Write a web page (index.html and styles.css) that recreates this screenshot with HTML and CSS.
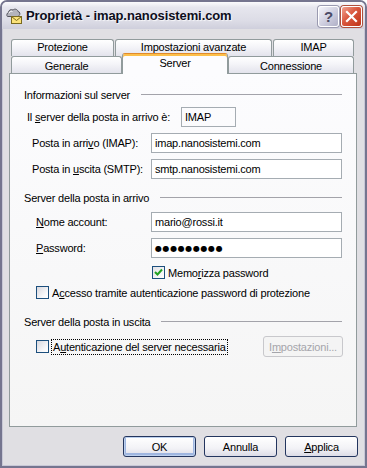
FILE: index.html
```html
<!DOCTYPE html>
<html lang="it">
<head>
    <meta charset="UTF-8">
    <title>Proprietà - imap.nanosistemi.com</title>
    <link rel="stylesheet" href="styles.css">
</head>
<body>
    <div class="window">
        <div class="titlebar">
            <svg class="app-icon" width="16" height="16" viewBox="0 0 16 16">
                <path d="M1.5 8.5 C0.5 8.5 0.5 5 2.5 4.5 C2.5 2 5 1 7 2 C8.5 0.5 11.5 1 12 3.5 C14 3.5 14.5 6.5 13 7.5 L12 8.5 Z" fill="#b4b4bc" stroke="#55555f" stroke-width="1"/>
                <path d="M3 5 C3.5 3.5 5 3 6.5 3.5" fill="none" stroke="#fff" stroke-width="1"/>
                <rect x="5.5" y="8.5" width="10" height="7" fill="#fbe27a" stroke="#7a6a20" stroke-width="1"/>
                <path d="M5.5 8.5 L10.5 12.5 L15.5 8.5" fill="none" stroke="#7a6a20" stroke-width="1"/>
            </svg>
            <span class="title">Proprietà - imap.nanosistemi.com</span>
            <div class="caption-buttons">
                <div class="cap-btn help">?</div>
                <div class="cap-btn close">
                    <svg width="13" height="13" viewBox="0 0 13 13">
                        <path d="M2 2 L11 11 M11 2 L2 11" stroke="#fff" stroke-width="2.2" stroke-linecap="square"/>
                    </svg>
                </div>
            </div>
        </div>

        <div class="client">
            <div class="tabs">
                <div class="tab-row tab-row-back">
                    <div class="tab tab-protezione">Protezione</div>
                    <div class="tab tab-avanzate">Impostazioni avanzate</div>
                    <div class="tab tab-imap">IMAP</div>
                </div>
                <div class="tab-row tab-row-front">
                    <div class="tab tab-generale">Generale</div>
                    <div class="tab tab-server active">Server</div>
                    <div class="tab tab-connessione">Connessione</div>
                </div>
            </div>

            <div class="panel">
                <div class="group-head">
                    <span>Informazioni sul server</span>
                    <div class="group-line"></div>
                </div>

                <div class="row row-type">
                    <span class="label label-type">Il <u>s</u>erver della posta in arrivo è:</span>
                    <div class="field field-readonly">IMAP</div>
                </div>

                <div class="row row-server">
                    <span class="label label-server">Posta in arri<u>v</u>o (IMAP):</span>
                    <div class="field">imap.nanosistemi.com</div>
                </div>

                <div class="row row-server">
                    <span class="label label-server">Posta in <u>u</u>scita (SMTP):</span>
                    <div class="field">smtp.nanosistemi.com</div>
                </div>

                <div class="group-head group-second">
                    <span>Server della posta in arrivo</span>
                    <div class="group-line"></div>
                </div>

                <div class="row row-account">
                    <span class="label label-account"><u>N</u>ome account:</span>
                    <div class="field">mario@rossi.it</div>
                </div>

                <div class="row row-account row-password">
                    <span class="label label-account"><u>P</u>assword:</span>
                    <div class="field"><span class="dots">●●●●●●●●●</span></div>
                </div>

                <div class="check check-remember">
                    <div class="box checked">
                        <svg width="11" height="11" viewBox="0 0 11 11">
                            <path d="M2 5 L4.5 7.5 L9 2.5" fill="none" stroke="#21a121" stroke-width="2"/>
                        </svg>
                    </div>
                    <span>Memo<u>r</u>izza password</span>
                </div>

                <div class="check check-spa">
                    <div class="box"></div>
                    <span>A<u>c</u>cesso tramite autenticazione password di protezione</span>
                </div>

                <div class="group-head group-third">
                    <span>Server della posta in uscita</span>
                    <div class="group-line"></div>
                </div>

                <div class="row row-auth">
                    <div class="check">
                        <div class="box"></div>
                        <span class="focused">A<u>u</u>tenticazione del server necessaria</span>
                    </div>
                    <div class="btn btn-disabled">I<u>m</u>postazioni...</div>
                </div>
            </div>

            <div class="buttons">
                <div class="btn btn-default">OK</div>
                <div class="btn">Annulla</div>
                <div class="btn"><u>A</u>pplica</div>
            </div>
        </div>
    </div>
</body>
</html>
```

FILE: styles.css
```css
* {
    box-sizing: border-box;
}

body {
    margin: 0;
    font-family: "Liberation Sans", Arial, sans-serif;
    font-size: 11px;
    letter-spacing: -0.2px;
    color: #000;
    background: #fff;
}

u {
    text-decoration: underline;
    text-underline-offset: 1px;
}

.window {
    width: 367px;
    height: 468px;
    display: flex;
    flex-direction: column;
    border: 2px solid #75758f;
    border-radius: 7px 7px 0 0;
    background: #e0dfe3;
    overflow: hidden;
}

/* title bar */
.titlebar {
    height: 27px;
    flex: none;
    display: flex;
    align-items: center;
    padding: 0 3px 0 4px;
    background: linear-gradient(#fbfbfd 0%, #e6e6ee 20%, #dcdce6 70%, #cfcfdc 100%);
}

.app-icon {
    flex: none;
    margin-top: 1px;
}

.title {
    margin-left: 4px;
    font-weight: bold;
    font-size: 13px;
    letter-spacing: -0.1px;
    color: #0e0e1c;
    text-shadow: 1px 1px 1px rgba(255, 255, 255, 0.8);
}

.caption-buttons {
    margin-left: auto;
    display: flex;
    gap: 2px;
    margin-top: 2px;
}

.cap-btn {
    width: 21px;
    height: 21px;
    border: 1px solid #fff;
    border-radius: 3px;
    display: flex;
    align-items: center;
    justify-content: center;
}

.cap-btn.help {
    background: linear-gradient(135deg, #f4f4fa, #cacadc 60%, #b0b0c6);
    color: #4a4a66;
    font-weight: bold;
    font-size: 15px;
    box-shadow: 0 0 0 1px #9a9ab0;
}

.cap-btn.close {
    background: linear-gradient(135deg, #f2a290, #d9573e 45%, #c03418);
    box-shadow: 0 0 0 1px #b0503c;
}

/* dialog body */
.client {
    flex: 1;
    border: 1px solid #c8c8d6;
    border-top: none;
    padding: 10px 0 0 6px;
}

.tabs {
    margin-left: 2px;
}

.tab-row {
    display: flex;
    align-items: flex-start;
    height: 17px;
}

.tab {
    height: 17px;
    border: 1px solid #919b9c;
    border-bottom: none;
    border-radius: 3px 3px 0 0;
    background: linear-gradient(#ffffff, #f4f4f8 45%, #e3e3ec);
    display: flex;
    align-items: center;
    justify-content: center;
}

.tab-row-back .tab {
    padding-bottom: 2px;
}

.tab-row-front .tab {
    padding-top: 2px;
}

.tab-protezione { width: 103px; margin-right: 1px; }
.tab-avanzate { width: 157px; margin-right: 1px; }
.tab-imap { width: 81px; }
.tab-generale { width: 111px; }
.tab-server { width: 106px; }
.tab-connessione { width: 126px; }

.tab-row-front .tab.active {
    position: relative;
    z-index: 1;
    height: 21px;
    margin-top: -3px;
    margin-bottom: -1px;
    background: #fcfcfe;
    border-top: 1px solid #e08a2c;
    box-shadow: inset 0 2px 0 #fcbf4a;
    padding-top: 0;
    padding-bottom: 2px;
}

.panel {
    width: 348px;
    height: 354px;
    border: 1px solid #919b9c;
    background: linear-gradient(#fcfcfe, #f5f5f5);
    padding: 14px 14px 0 14px;
}

.group-head {
    display: flex;
    align-items: center;
    height: 14px;
}

.group-line {
    flex: 1;
    margin-left: 11px;
    margin-top: -1px;
    border-top: 1px solid #a3a3aa;
}

.group-second { margin-top: 12px; }
.group-third { margin-top: 16px; }

.row {
    display: flex;
    align-items: center;
}

.label {
    flex: none;
}

.field {
    width: 193px;
    height: 20px;
    border: 1px solid #a5acb2;
    background: #fff;
    padding: 0 3px;
    display: flex;
    align-items: center;
}

.row-type {
    margin-top: 5px;
    padding-left: 3px;
}

.label-type { width: 154px; }

.field-readonly {
    width: 55px;
    background: transparent;
}

.row-server {
    margin-top: 6px;
    padding-left: 8px;
}

.label-server { width: 119px; }

.row-account {
    margin-top: 7px;
    padding-left: 12px;
}

.row-password {
    margin-top: 6px;
}

.label-account { width: 115px; }

.dots {
    font-family: "DejaVu Sans", sans-serif;
    font-size: 8px;
    letter-spacing: 0.6px;
}

.check {
    display: flex;
    align-items: center;
    height: 13px;
}

.box {
    width: 13px;
    height: 13px;
    flex: none;
    border: 1px solid #1c4f7d;
    background: linear-gradient(135deg, #d8d8de, #f8f8fa 70%, #fff);
    margin-right: 3px;
    display: flex;
    align-items: center;
    justify-content: center;
}

.box.checked {
    background: linear-gradient(135deg, #e2e2e6, #fff);
}

.check-remember {
    margin-top: 8px;
    padding-left: 128px;
}

.check-spa {
    margin-top: 7px;
    padding-left: 12px;
}

.row-auth {
    margin-top: 7px;
    padding-left: 12px;
    justify-content: space-between;
    margin-right: -1px;
}

.focused {
    outline: 1px dotted #000;
    padding: 1px 1px;
}

/* push buttons */
.btn {
    width: 73px;
    height: 21px;
    border: 1px solid #23355e;
    border-radius: 3px;
    background: linear-gradient(#ffffff, #f2f2f6 60%, #dcdce6);
    display: flex;
    align-items: center;
    justify-content: center;
}

.btn-default {
    box-shadow: inset 0 0 0 1px #bcd0ee, inset 0 -1px 0 2px #9fb6e0;
}

.btn-disabled {
    width: 80px;
    height: 21px;
    border-color: #c8c8cc;
    background: #f4f4f4;
    color: #a5a5ab;
}

.buttons {
    display: flex;
    justify-content: flex-end;
    gap: 8px;
    margin-top: 9px;
    padding-right: 6px;
}
```
